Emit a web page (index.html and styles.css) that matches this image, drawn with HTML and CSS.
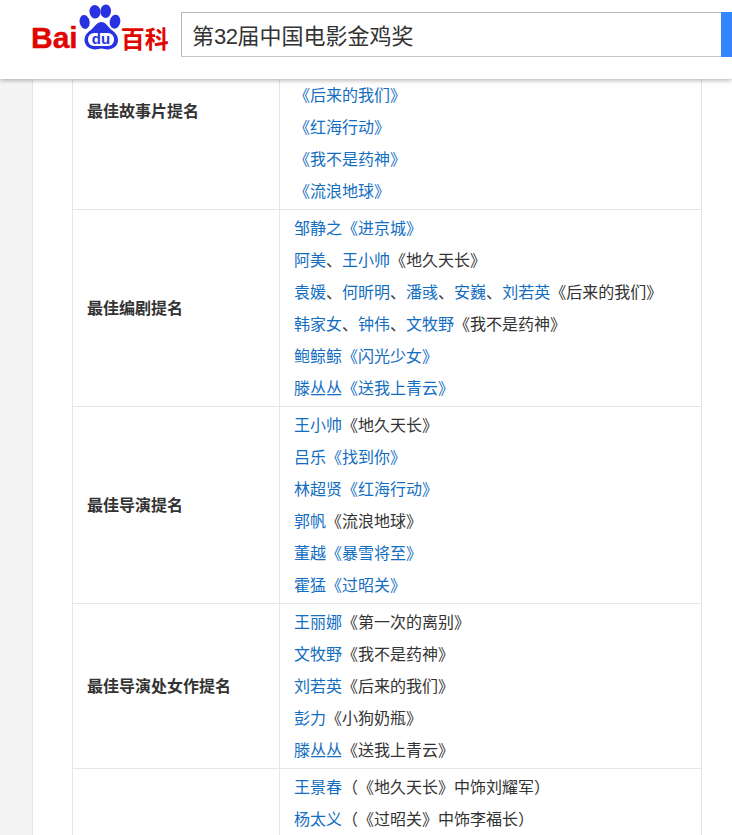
FILE: index.html
```html
<!DOCTYPE html>
<html lang="zh-CN">
<head>
<meta charset="utf-8">
<title>第32届中国电影金鸡奖</title>
<link rel="stylesheet" href="styles.css">
</head>
<body>
<header class="topbar">
  <div class="logo">
    <span class="logo-bai">Bai</span>
    <svg class="logo-paw" width="42" height="52" viewBox="0 0 42 52">
      <ellipse cx="5.6" cy="22" rx="5" ry="7" fill="#2932e1" transform="rotate(-10 5.6 22)"/>
      <ellipse cx="16" cy="11.7" rx="5.5" ry="6.8" fill="#2932e1" transform="rotate(-6 16 11.7)"/>
      <ellipse cx="26.7" cy="11.2" rx="5.3" ry="6.8" fill="#2932e1" transform="rotate(3 26.7 11.2)"/>
      <ellipse cx="36" cy="21.7" rx="5.3" ry="7" fill="#2932e1" transform="rotate(10 36 21.7)"/>
      <path d="M22.5 22c4 0 6 4 9 7 4 3 7.500 6 7.500 11 0 6-5 9.500-10.500 9.500-2.500 0-4-1-6-1s-4 1-6.500 1C11 49.500 5.500 46 5.500 40c0-5 3.500-8 7.500-11 3-3 5-7 9.500-7z" fill="#2932e1"/>
      <rect x="9" y="33" width="26" height="13" rx="6" fill="#fff"/>
      <text class="logo-du" x="22" y="44" text-anchor="middle">du</text>
    </svg>
    <span class="logo-baike">百科</span>
  </div>
  <div class="search">
    <div class="search-input">第<span class="digits">32</span>届中国电影金鸡奖</div>
    <div class="search-btn"></div>
  </div>
</header>
<main class="page">
  <div class="sheet">
    <table class="awards">
      <tr>
        <th>最佳故事片提名</th>
        <td>
          <p><a>《地久天长》</a></p>
          <p><a>《过昭关》</a></p>
          <p><a>《后来的我们》</a></p>
          <p><a>《红海行动》</a></p>
          <p><a>《我不是药神》</a></p>
          <p><a>《流浪地球》</a></p>
        </td>
      </tr>
      <tr>
        <th>最佳编剧提名</th>
        <td>
          <p><a>邹静之</a><a>《进京城》</a></p>
          <p><a>阿美</a>、<a>王小帅</a>《地久天长》</p>
          <p><a>袁媛</a>、<a>何昕明</a>、<a>潘彧</a>、<a>安巍</a>、<a>刘若英</a>《后来的我们》</p>
          <p><a>韩家女</a>、<a>钟伟</a>、<a>文牧野</a>《我不是药神》</p>
          <p><a>鲍鲸鲸</a><a>《闪光少女》</a></p>
          <p><a>滕丛丛</a><a>《送我上青云》</a></p>
        </td>
      </tr>
      <tr>
        <th>最佳导演提名</th>
        <td>
          <p><a>王小帅</a>《地久天长》</p>
          <p><a>吕乐</a><a>《找到你》</a></p>
          <p><a>林超贤</a><a>《红海行动》</a></p>
          <p><a>郭帆</a>《流浪地球》</p>
          <p><a>董越</a><a>《暴雪将至》</a></p>
          <p><a>霍猛</a><a>《过昭关》</a></p>
        </td>
      </tr>
      <tr>
        <th>最佳导演处女作提名</th>
        <td>
          <p><a>王丽娜</a>《第一次的离别》</p>
          <p><a>文牧野</a>《我不是药神》</p>
          <p><a>刘若英</a>《后来的我们》</p>
          <p><a>彭力</a>《小狗奶瓶》</p>
          <p><a>滕丛丛</a>《送我上青云》</p>
        </td>
      </tr>
      <tr>
        <th>最佳男主角提名</th>
        <td>
          <p><a>王景春</a>（《地久天长》中饰刘耀军）</p>
          <p><a>杨太义</a>（《过昭关》中饰李福长）</p>
          <p><a>徐峥</a>（《我不是药神》中饰程勇）</p>
          <p><a>张译</a>（《红海行动》中饰杨锐）</p>
          <p><a>彭昱畅</a>（《闪光少女》）</p>
        </td>
      </tr>
    </table>
  </div>
</main>
</body>
</html>
```
FILE: styles.css
```css
* { box-sizing: border-box; }
html, body { margin: 0; height: 100%; overflow: hidden; }
body {
  background: #f4f4f4;
  font-family: "Liberation Sans", "Noto Sans CJK SC", sans-serif;
  color: #333;
  text-spacing-trim: space-all;
}
.topbar {
  position: relative;
  z-index: 2;
  height: 79px;
  background: #fff;
  box-shadow: 0 1px 5px rgba(0,0,0,.35);
  display: flex;
  align-items: flex-start;
  padding-left: 31px;
}
.logo {
  display: flex;
  align-items: flex-start;
  width: 150px;
  height: 79px;
  color: #e10601;
}
.logo-bai {
  font: bold 30px/1 "Liberation Sans", sans-serif;
  margin-top: 23px;
  -webkit-text-stroke: .4px #e10601;
}
.logo-paw { margin-left: 1px; flex: none; }
.logo-du {
  font: bold 15px "Liberation Sans", sans-serif;
  fill: #2932e1;
}
.logo-baike {
  font: bold 24px/1 "Noto Sans CJK SC", sans-serif;
  margin-top: 26px;
  white-space: nowrap;
}
.search {
  display: flex;
  flex: none;
  width: 551px;
  height: 45px;
  margin-top: 12px;
  border: 1px solid #b8b8b8;
  border-right: 0;
  border-bottom-color: #c8c8c8;
}
.search-input {
  flex: 1;
  font-size: 22px;
  line-height: 45px;
  padding-left: 10px;
  color: #333;
  margin-top: 1px;
}
.digits { letter-spacing: -.5px; }
.search-btn { width: 11px; margin-top: -1px; height: 45px; background: #3385ff; }
.page {
  margin: -67px 0 0 32px;
}
.sheet {
  width: 700px;
  height: 900px;
  background: #fff;
  border-left: 1px solid #e6e6e6;
  padding-left: 39px;
}
.awards {
  border-collapse: collapse;
  width: 630px;
  table-layout: fixed;
  font-size: 16px;
  line-height: 32px;
  border: 1px solid #e6e6e6;
  border-top: 0;
}
.awards th, .awards td {
  border: 1px solid #e6e6e6;
  padding: 3px 14px 1px;
}
.awards th {
  width: 207px;
  text-align: left;
  font-weight: bold;
  color: #333;
}
.awards p { margin: 0; white-space: nowrap; }
.awards a { color: #136ec2; }
```
